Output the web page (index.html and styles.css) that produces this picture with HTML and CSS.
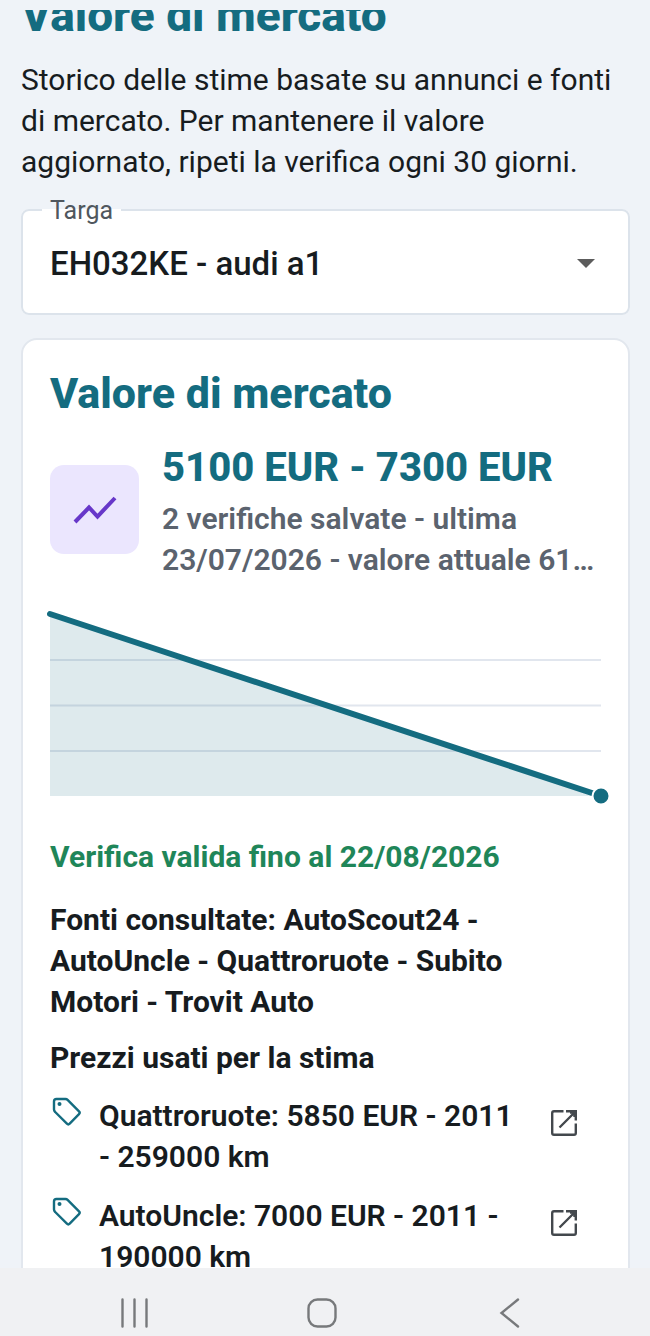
FILE: index.html
```html
<!DOCTYPE html>
<html lang="it">

<head>
    <meta charset="UTF-8">
    <meta name="viewport" content="width=device-width, initial-scale=1.0">
    <title>Valore di mercato</title>
    <link rel="stylesheet" href="styles.css">
</head>

<body>
    <main class="page">
        <h1>Valore di mercato</h1>
        <p class="intro">Storico delle stime basate su annunci e fonti di mercato. Per mantenere il valore aggiornato, ripeti la verifica ogni 30 giorni.</p>

        <fieldset class="field">
            <legend><label for="targa">Targa</label></legend>
            <div class="select_wrap">
                <select id="targa">
                    <option>EH032KE - audi a1</option>
                </select>
                <svg class="arrow" viewBox="0 0 18 9" aria-hidden="true"><path d="M0 0h18l-9 9z" /></svg>
            </div>
        </fieldset>

        <section class="card">
            <h2>Valore di mercato</h2>

            <div class="summary">
                <div class="badge">
                    <svg viewBox="0 0 44 30" aria-hidden="true"><path d="M2 27 16 12.500 24.500 21.500 42 3" /></svg>
                </div>
                <div class="summary_text">
                    <p class="price">5100 EUR - 7300 EUR</p>
                    <p class="detail">2 verifiche salvate - ultima 23/07/2026 - valore attuale <span class="current">6100 EUR</span></p>
                </div>
            </div>

            <svg class="chart" viewBox="0 0 551 182" role="img" aria-label="Andamento del valore">
                <path class="grid" d="M0 46H551M0 91.500H551M0 137H551" />
                <path class="area" d="M0 0 551 182H0z" />
                <path class="line" d="M0 0 551 182" />
                <circle class="dot" cx="551" cy="182" r="8.500" />
            </svg>

            <p class="valid">Verifica valida fino al 22/08/2026</p>
            <p class="sources">Fonti consultate: AutoScout24 - AutoUncle - Quattroruote - Subito Motori - Trovit Auto</p>

            <h3>Prezzi usati per la stima</h3>
            <ul class="prices">
                <li>
                    <svg class="tag" viewBox="0 0 34 34" aria-hidden="true"><path d="M6.500 4H15.500Q16.700 4 17.600 4.900L29 16.300Q30.400 17.700 29 19.100L19.700 28.700Q18.300 30.100 16.900 28.700L5.200 17Q4 15.900 4 14.500V6.500Q4 4 6.500 4z" /><circle cx="9.500" cy="9" r="2" /></svg>
                    <span>Quattroruote: 5850 EUR - 2011 - 259000 km</span>
                    <a href="#" aria-label="Apri Quattroruote">
                        <svg viewBox="0 0 26 26" aria-hidden="true"><path d="M12.500 1.200H3Q1.200 1.200 1.200 3V23Q1.200 24.800 3 24.800H23Q24.800 24.800 24.800 23V13.500M15 1.200H24.800V10.500M8.500 17.500 24 2M19 2.500H23.500V7" /></svg>
                    </a>
                </li>
                <li>
                    <svg class="tag" viewBox="0 0 34 34" aria-hidden="true"><path d="M6.500 4H15.500Q16.700 4 17.600 4.900L29 16.300Q30.400 17.700 29 19.100L19.700 28.700Q18.300 30.100 16.900 28.700L5.200 17Q4 15.900 4 14.500V6.500Q4 4 6.500 4z" /><circle cx="9.500" cy="9" r="2" /></svg>
                    <span>AutoUncle: 7000 EUR - 2011 - 190000 km</span>
                    <a href="#" aria-label="Apri AutoUncle">
                        <svg viewBox="0 0 26 26" aria-hidden="true"><path d="M12.500 1.200H3Q1.200 1.200 1.200 3V23Q1.200 24.800 3 24.800H23Q24.800 24.800 24.800 23V13.500M15 1.200H24.800V10.500M8.500 17.500 24 2M19 2.500H23.500V7" /></svg>
                    </a>
                </li>
            </ul>
        </section><!-- .card end -->
    </main>

    <nav class="system_bar">
        <button type="button" aria-label="Recenti">
            <svg viewBox="0 0 30 30"><path d="M2.500 1.500V28.500M14.500 1.500V28.500M26.500 1.500V28.500" /></svg>
        </button>
        <button type="button" aria-label="Home">
            <svg viewBox="0 0 30 30"><rect x="1.500" y="1.500" width="27" height="27" rx="9" /></svg>
        </button>
        <button type="button" aria-label="Indietro">
            <svg viewBox="0 0 30 30"><path d="M23 1.500 6.500 15 23 28.500" /></svg>
        </button>
    </nav>
</body>

</html>
```
FILE: styles.css
```css
@charset "utf-8";

* {
    margin: 0;
    padding: 0;
    box-sizing: border-box;
}

body {
    height: 100vh;
    padding-top: 10px;
    display: flex;
    flex-direction: column;
    background-color: #eff3f8;
    color: #171c1f;
    font-family: Roboto, "Liberation Sans", sans-serif;
    font-size: 30px;
    line-height: 41px;
}

ul {
    list-style: none;
}

svg {
    display: block;
    fill: none;
}

/* scrolled area, the title is partly cut at the top */
.page {
    flex: 1;
    min-height: 0;
    padding: 0 20px 0 21px;
    overflow: hidden;
}

h1 {
    margin-top: -23px;
    margin-bottom: 16px;
    font-size: 46px;
    line-height: 56px;
    font-weight: 800;
    color: #146c80;
}

.intro {
    margin-bottom: 13px;
}

/* select */
.field {
    min-width: 0;
    margin-bottom: 23px;
    padding: 0 27px;
    border: 2px solid #dce3eb;
    border-radius: 8px;
    background-color: #fff;
}

.field legend {
    margin-left: -8px;
    padding: 2px 8px 0;
    font-size: 25px;
    line-height: 28px;
    color: #50575e;
}

.select_wrap {
    display: flex;
    align-items: center;
}

.select_wrap select {
    flex: 1;
    min-width: 0;
    height: 88px;
    padding-bottom: 12px;
    appearance: none;
    border: 0;
    background: none;
    color: inherit;
    font-family: inherit;
    font-size: 33px;
    font-weight: 500;
}

.arrow {
    width: 18px;
    margin-right: 6px;
    margin-bottom: 12px;
    fill: #5c5c5c;
}

/* card */
.card {
    padding: 28px 27px;
    border: 2px solid #e2e7ee;
    border-radius: 16px;
    background-color: #fff;
}

h2 {
    margin-bottom: 25px;
    font-size: 43px;
    line-height: 50px;
    font-weight: 800;
    color: #146c80;
}

.summary {
    display: flex;
    align-items: center;
    gap: 23px;
    margin-bottom: 34px;
}

.badge {
    flex: none;
    width: 89px;
    height: 89px;
    margin-bottom: 4px;
    display: flex;
    align-items: center;
    justify-content: center;
    border-radius: 14px;
    background-color: #ebe6fe;
}

.badge svg {
    width: 44px;
    stroke: #6737c9;
    stroke-width: 4;
}

.summary_text {
    min-width: 0;
}

.price {
    margin-bottom: 5px;
    font-size: 40px;
    line-height: 50px;
    font-weight: 800;
    color: #146c80;
}

.detail {
    display: -webkit-box;
    -webkit-box-orient: vertical;
    -webkit-line-clamp: 2;
    overflow: hidden;
    font-weight: 600;
    color: #5b636e;
}

.current {
    word-break: break-all;
}

.chart {
    width: 100%;
    margin-bottom: 40px;
    overflow: visible;
}

.chart .grid {
    stroke: #e1e6ee;
    stroke-width: 2;
}

.chart .area {
    fill: #146c80;
    fill-opacity: 0.14;
}

.chart .line {
    stroke: #146c80;
    stroke-width: 6;
    stroke-linecap: round;
}

.chart .dot {
    fill: #146c80;
    stroke: #fff;
    stroke-width: 2;
}

.valid {
    margin-bottom: 22px;
    font-weight: 700;
    color: #1f8659;
}

.sources {
    margin-bottom: 15px;
    padding-right: 20px;
    font-weight: 700;
}

h3 {
    margin-bottom: 17px;
    font-size: 30px;
    font-weight: 700;
}

.prices {
    display: grid;
    gap: 18px;
}

.prices li {
    display: flex;
    align-items: flex-start;
    gap: 15px;
    padding-right: 9px;
    font-weight: 600;
}

.prices span {
    flex: 1;
}

.tag {
    flex: none;
    width: 34px;
    stroke: #146c80;
    stroke-width: 2.4;
}

.tag circle {
    fill: #146c80;
    stroke: none;
}

.prices a {
    flex: none;
    width: 56px;
    height: 56px;
    display: flex;
    align-items: center;
    justify-content: center;
}

.prices a svg {
    width: 26px;
    stroke: #43484d;
    stroke-width: 2.4;
}

/* android buttons */
.system_bar {
    display: grid;
    grid-template-columns: repeat(3, 1fr);
    padding: 30px 46px 8px 41px;
    background-color: #f0f1f3;
}

.system_bar button {
    display: flex;
    justify-content: center;
    border: 0;
    background: none;
}

.system_bar svg {
    width: 30px;
    stroke: #77797b;
    stroke-width: 2.4;
    stroke-linecap: round;
}
```
